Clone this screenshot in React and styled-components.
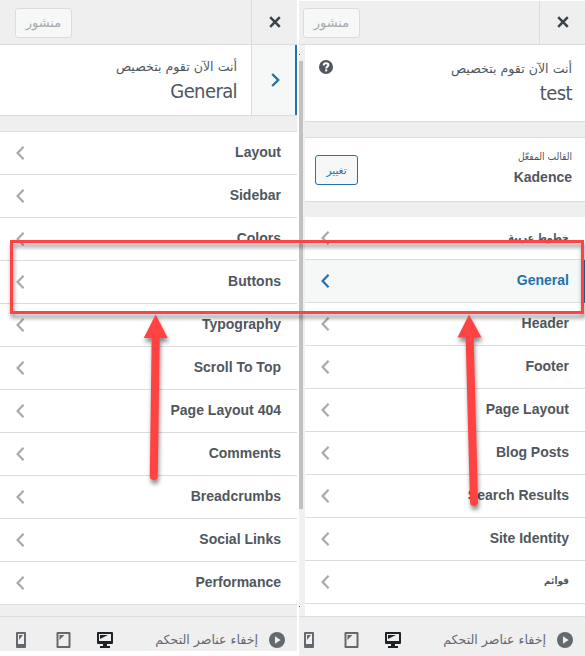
import React from 'react';
import styled, { createGlobalStyle } from 'styled-components';


const GlobalStyle = createGlobalStyle`
    * {
        box-sizing: border-box;
    }
    body {
        margin: 0;
        background-color: #fff;
        font-family: "Liberation Sans", "DejaVu Sans", sans-serif;
        color: #50575e;
    }
    svg {
        display: block;
    }
`
const Page = styled.div`
    position: relative;
    display: flex;
    gap: 2px;
    width: 585px;
    height: 656px;
    overflow: hidden;
`
const Panel = styled.div`
    display: flex;
    flex-direction: column;
    direction: rtl;
    width: ${props => props.$width}px;
    height: ${props => props.$height}px;
    margin-top: ${props => props.$top || 0}px;
    background-color: #efefef;
    overflow: hidden;
`
const Topbar = styled.div`
    display: flex;
    flex: none;
    justify-content: space-between;
    height: ${props => props.$height}px;
    border-bottom: 1px solid #dcdcde;
`
const CloseButton = styled.button`
    display: flex;
    justify-content: center;
    width: 46px;
    padding: ${props => props.$top}px 0 0;
    border: none;
    border-left: 1px solid #dcdcde;
    background: none;
    cursor: pointer;
`
const PublishButton = styled.button`
    width: 57px;
    height: 30px;
    margin-top: ${props => props.$top}px;
    margin-left: ${props => props.$left}px;
    padding: 0;
    border: 1px solid #dcdcde;
    border-radius: 3px;
    background-color: #f6f7f7;
    color: #a7aaad;
    font-family: "DejaVu Sans", sans-serif;
    font-size: 13px;
    line-height: 28px;
`
const Body = styled.div`
    display: flex;
    flex: none;
    height: 571px;
`
const Content = styled.div`
    flex: 1;
    min-width: 0;
`
const Scrollbar = styled.div`
    width: 6px;
    padding-top: 9px;
    background-color: #f0f0f0;
`
const Thumb = styled.div`
    width: 4px;
    height: 448px;
    margin: 6px 2px 97px 0;
    background-color: #c1c1c1;
`
const ScrollArrow = styled.div`
    width: 1px;
    height: 1px;
    margin-right: 5px;
    background-color: #505050;
`
const SectionHead = styled.div`
    display: flex;
    height: 71px;
    border-bottom: 1px solid #dcdcde;
    background-color: #fff;
`
const BackButton = styled.button`
    display: flex;
    align-items: center;
    justify-content: center;
    width: 46px;
    padding: 0 0 0 4px;
    border: none;
    border-right: 2px solid #2271b1;
    border-left: 1px solid #dcdcde;
    background-color: #f6f7f7;
    color: #2271b1;
    cursor: pointer;
`
const HeadText = styled.div`
    flex: 1;
    padding: 11px 14px 0 0;
`
const Notice = styled.div`
    font-family: "DejaVu Sans", sans-serif;
    font-size: 12.6px;
    line-height: 22px;
`
const Title = styled.div`
    font-family: "DejaVu Sans Condensed", "DejaVu Sans", sans-serif;
    font-stretch: condensed;
    font-size: 20px;
    letter-spacing: -0.6px;
    line-height: 27px;
`
const InfoHead = styled.div`
    display: flex;
    justify-content: space-between;
    height: 77px;
    padding: 13px 13px 0 14px;
    border-bottom: 1px solid #dcdcde;
    background-color: #fff;
`
const Theme = styled.div`
    display: flex;
    justify-content: space-between;
    height: 65px;
    margin: 15px 0;
    padding: 10px 13px 0 10px;
    border: solid #dcdcde;
    border-width: 1px 0;
    background-color: #fff;
`
const ThemeLabel = styled.div`
    font-family: "DejaVu Sans Condensed", "DejaVu Sans", sans-serif;
    font-stretch: condensed;
    font-size: 10.2px;
    line-height: 18px;
`
const ThemeName = styled.div`
    font-size: 14px;
    font-weight: bold;
    line-height: 22px;
`
const ChangeButton = styled.button`
    width: 43px;
    height: 30px;
    margin-top: 7px;
    padding: 0;
    border: 1px solid #2271b1;
    border-radius: 3px;
    background-color: #f6f7f7;
    color: #2271b1;
    font-family: "DejaVu Sans", sans-serif;
    font-size: 10.5px;
    line-height: 26px;
    cursor: pointer;
`
const List = styled.div`
    margin-top: ${props => props.$gap || 0}px;
    height: ${props => props.$height || 'auto'};
    border-top: ${props => props.$line ? '1px solid #dcdcde' : 'none'};
    background-color: #fff;
`
const Row = styled.div`
    display: flex;
    align-items: center;
    justify-content: space-between;
    height: 43px;
    padding: 0 ${props => props.$active ? 13 : 16}px 0 16px;
    border-bottom: 1px solid #dcdcde;
    border-right: ${props => props.$active ? '3px solid #2271b1' : 'none'};
    background-color: ${props => props.$active ? '#f6f7f7' : '#fff'};
    color: ${props => props.$active ? '#2271b1' : '#a7aaad'};
    cursor: pointer;
`
const RowTitle = styled.span`
    padding-bottom: 2px;
    color: ${props => props.$active ? '#2271b1' : '#50575e'};
    font-family: "Liberation Sans", "DejaVu Sans Condensed", "DejaVu Sans", sans-serif;
    font-size: ${props => props.$size || 14}px;
    font-weight: bold;
    line-height: 20px;
`
const Footer = styled.div`
    display: flex;
    flex: none;
    align-items: flex-start;
    height: ${props => props.$height}px;
    padding-top: 15px;
    padding-right: 12px;
    border-top: 1px solid #dcdcde;
    color: #646970;
`
const Collapse = styled.span`
    width: 106px;
    margin-top: -3px;
    margin-right: 11px;
    font-family: "DejaVu Sans", sans-serif;
    font-size: 12.6px;
    line-height: 22px;
    white-space: nowrap;
`
const Devices = styled.div`
    display: flex;
    direction: ltr;
    gap: 23.5px;
    margin-right: auto;
    margin-left: ${props => props.$left}px;
`
const Highlight = styled.div`
    position: absolute;
    top: 240px;
    left: 10px;
    width: 574px;
    height: 74px;
    border: 3px solid #ff4343;
    filter: drop-shadow(1px 4px 2px rgba(0, 0, 0, 0.45));
`
const Arrows = styled.svg`
    position: absolute;
    top: 0;
    left: 0;
    filter: drop-shadow(1px 4px 2px rgba(0, 0, 0, 0.45));
`

const leftItems = ['Layout', 'Sidebar', 'Colors', 'Buttons', 'Typography', 'Scroll To Top', 'Page Layout 404', 'Comments', 'Breadcrumbs', 'Social Links', 'Performance']

const rightItems = [
    { title: 'خطوط عربية', size: 10.6 },
    { title: 'General', active: true },
    { title: 'Header' },
    { title: 'Footer' },
    { title: 'Page Layout' },
    { title: 'Blog Posts' },
    { title: 'Search Results' },
    { title: 'Site Identity' },
    { title: 'قوائم', size: 10 },
]

function CloseIcon() {
    return (
        <svg width="12" height="12" viewBox="0 0 12 12" stroke="#3c434a" strokeWidth="2.6">
            <path d="M1.2 1.2l9.6 9.6M10.8 1.2l-9.6 9.6" />
        </svg>
    )
}

function Chevron() {
    return (
        <svg width="9" height="14" viewBox="0 0 9 14" fill="none" stroke="currentColor" strokeWidth="2.2">
            <path d="M7.6 0.8L1.6 7l6 6.2" />
        </svg>
    )
}

function BackIcon() {
    return (
        <svg width="9" height="14" viewBox="0 0 9 14" fill="none" stroke="currentColor" strokeWidth="2.4">
            <path d="M1.2 1l6 6-6 6" />
        </svg>
    )
}

const HelpSvg = styled.svg`
    margin-top: 2px;
`

function HelpIcon() {
    return (
        <HelpSvg width="14" height="14" viewBox="0 0 14 14">
            <circle cx="7" cy="7" r="7" fill="#50575e" />
            <path d="M4.6 5.4C4.700 3.900 5.700 3.300 7 3.300c1.400 0 2.400.7 2.400 1.800 0 1.600-2.200 1.500-2.200 3.300" fill="none" stroke="#fff" strokeWidth="2" />
            <rect x="6.200" y="9.400" width="2" height="2" fill="#fff" />
        </HelpSvg>
    )
}

function PlayIcon() {
    return (
        <svg width="16" height="16" viewBox="0 0 16 16">
            <circle cx="8" cy="8" r="8" fill="#646970" />
            <path d="M6 4.200l5.600 3.800L6 11.800z" fill="#efefef" />
        </svg>
    )
}

function DeviceIcons({ left }) {
    return (
        <Devices $left={left}>
            <svg width="20" height="16" viewBox="0 0 20 16">
                <rect x="5" width="10" height="16" rx="1" fill="#646970" />
                <rect x="7" y="2" width="6" height="10" fill="#efefef" />
                <path d="M8 3h4L8 8z" fill="#646970" />
            </svg>
            <svg width="18" height="16" viewBox="0 0 18 16">
                <rect x="1.500" width="14" height="16" rx="1" fill="#646970" />
                <rect x="3.500" y="2" width="10" height="12" fill="#efefef" />
                <path d="M4.500 3h5l-5 5z" fill="#646970" />
            </svg>
            <svg width="18" height="16" viewBox="0 0 18 16">
                <rect x="1" width="16" height="12" rx="1" fill="#1d2327" />
                <rect x="3" y="2" width="12" height="7" fill="#efefef" />
                <path d="M4 3h8L4 7z" fill="#1d2327" />
                <path d="M7 12h4v2h3v2H4v-2h3z" fill="#1d2327" />
            </svg>
        </Devices>
    )
}

function App() {
    return (
        <Page>
            <GlobalStyle />
            <Panel $width={297} $height={651}>
                <Topbar $height={45}>
                    <CloseButton $top={16}><CloseIcon /></CloseButton>
                    <PublishButton $top={8} $left={15}>منشور</PublishButton>
                </Topbar>
                <Body>
                    <Content>
                        <SectionHead>
                            <BackButton><BackIcon /></BackButton>
                            <HeadText>
                                <Notice>أنت الآن تقوم بتخصيص</Notice>
                                <Title>General</Title>
                            </HeadText>
                        </SectionHead>
                        <List $gap={15} $line>
                            {leftItems.map((item) => (
                                <Row key={item}>
                                    <RowTitle>{item}</RowTitle>
                                    <Chevron />
                                </Row>
                            ))}
                        </List>
                    </Content>
                </Body>
                <Footer $height={35}>
                    <PlayIcon />
                    <Collapse>إخفاء عناصر التحكم</Collapse>
                    <DeviceIcons left={11} />
                </Footer>
            </Panel>
            <Panel $width={286} $height={655} $top={1}>
                <Topbar $height={44}>
                    <CloseButton $top={15}><CloseIcon /></CloseButton>
                    <PublishButton $top={7} $left={4}>منشور</PublishButton>
                </Topbar>
                <Body>
                    <Content>
                        <InfoHead>
                            <div>
                                <Notice>أنت الآن تقوم بتخصيص</Notice>
                                <Title>test</Title>
                            </div>
                            <HelpIcon />
                        </InfoHead>
                        <Theme>
                            <div>
                                <ThemeLabel>القالب المفعّل</ThemeLabel>
                                <ThemeName>Kadence</ThemeName>
                            </div>
                            <ChangeButton>تغيير</ChangeButton>
                        </Theme>
                        <List $height="399px">
                            {rightItems.map((item) => (
                                <Row key={item.title} $active={item.active}>
                                    <RowTitle $active={item.active} $size={item.size}>{item.title}</RowTitle>
                                    <Chevron />
                                </Row>
                            ))}
                        </List>
                    </Content>
                    <Scrollbar>
                        <ScrollArrow />
                        <Thumb />
                        <ScrollArrow />
                    </Scrollbar>
                </Body>
                <Footer $height={40}>
                    <PlayIcon />
                    <Collapse>إخفاء عناصر التحكم</Collapse>
                    <DeviceIcons left={0} />
                </Footer>
            </Panel>
            <Highlight />
            <Arrows width="585" height="656" viewBox="0 0 585 656" fill="#ff4343">
                <path d="M155.700 314.500l12 23.500h-24z" />
                <path d="M155.700 336L153.800 476" stroke="#ff4343" strokeWidth="8" strokeLinecap="round" />
                <path d="M469 314.500l12.500 23h-24z" />
                <path d="M469.600 336L474 502" stroke="#ff4343" strokeWidth="8" strokeLinecap="round" />
            </Arrows>
        </Page>
    )
}
export default App;
